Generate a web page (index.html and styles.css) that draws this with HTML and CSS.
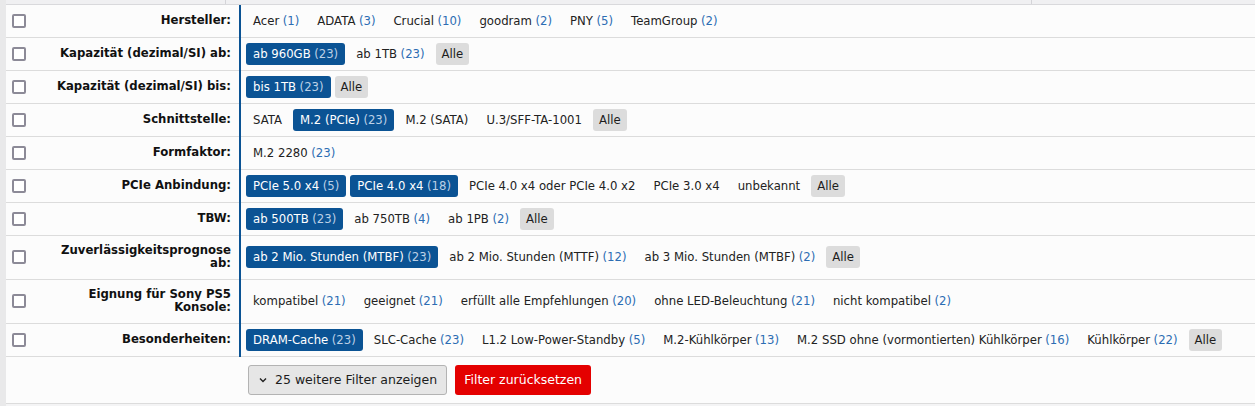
FILE: index.html
```html
<!DOCTYPE html>
<html lang="de">
<head>
<meta charset="utf-8">
<title>Filter</title>
<link rel="stylesheet" href="styles.css">
</head>
<body>
<div class="page">
  <div class="topstrip">
    <div class="ts-a"></div>
    <div class="ts-b"></div>
    <div class="ts-c"></div>
  </div>
  <div class="filters">
    <div class="row">
      <div class="lcell"><span class="check"></span><span class="label">Hersteller:</span></div>
      <div class="bar"></div>
      <div class="vcell">
        <span class="opt">Acer <span class="cnt">(1)</span></span>
        <span class="opt">ADATA <span class="cnt">(3)</span></span>
        <span class="opt">Crucial <span class="cnt">(10)</span></span>
        <span class="opt">goodram <span class="cnt">(2)</span></span>
        <span class="opt">PNY <span class="cnt">(5)</span></span>
        <span class="opt">TeamGroup <span class="cnt">(2)</span></span>
      </div>
    </div>
    <div class="row">
      <div class="lcell"><span class="check"></span><span class="label">Kapazität (dezimal/SI) ab:</span></div>
      <div class="bar"></div>
      <div class="vcell">
        <span class="opt sel">ab 960GB <span class="cnt">(23)</span></span>
        <span class="opt">ab 1TB <span class="cnt">(23)</span></span>
        <span class="opt all">Alle</span>
      </div>
    </div>
    <div class="row">
      <div class="lcell"><span class="check"></span><span class="label">Kapazität (dezimal/SI) bis:</span></div>
      <div class="bar"></div>
      <div class="vcell">
        <span class="opt sel">bis 1TB <span class="cnt">(23)</span></span>
        <span class="opt all">Alle</span>
      </div>
    </div>
    <div class="row">
      <div class="lcell"><span class="check"></span><span class="label">Schnittstelle:</span></div>
      <div class="bar"></div>
      <div class="vcell">
        <span class="opt">SATA</span>
        <span class="opt sel">M.2 (PCIe) <span class="cnt">(23)</span></span>
        <span class="opt">M.2 (SATA)</span>
        <span class="opt">U.3/SFF-TA-1001</span>
        <span class="opt all">Alle</span>
      </div>
    </div>
    <div class="row">
      <div class="lcell"><span class="check"></span><span class="label">Formfaktor:</span></div>
      <div class="bar"></div>
      <div class="vcell">
        <span class="opt">M.2 2280 <span class="cnt">(23)</span></span>
      </div>
    </div>
    <div class="row">
      <div class="lcell"><span class="check"></span><span class="label">PCIe Anbindung:</span></div>
      <div class="bar"></div>
      <div class="vcell">
        <span class="opt sel">PCIe 5.0 x4 <span class="cnt">(5)</span></span>
        <span class="opt sel">PCIe 4.0 x4 <span class="cnt">(18)</span></span>
        <span class="opt">PCIe 4.0 x4 oder PCIe 4.0 x2</span>
        <span class="opt">PCIe 3.0 x4</span>
        <span class="opt">unbekannt</span>
        <span class="opt all">Alle</span>
      </div>
    </div>
    <div class="row">
      <div class="lcell"><span class="check"></span><span class="label">TBW:</span></div>
      <div class="bar"></div>
      <div class="vcell">
        <span class="opt sel">ab 500TB <span class="cnt">(23)</span></span>
        <span class="opt">ab 750TB <span class="cnt">(4)</span></span>
        <span class="opt">ab 1PB <span class="cnt">(2)</span></span>
        <span class="opt all">Alle</span>
      </div>
    </div>
    <div class="row">
      <div class="lcell"><span class="check"></span><span class="label">Zuverlässigkeitsprognose ab:</span></div>
      <div class="bar"></div>
      <div class="vcell">
        <span class="opt sel">ab 2 Mio. Stunden (MTBF) <span class="cnt">(23)</span></span>
        <span class="opt">ab 2 Mio. Stunden (MTTF) <span class="cnt">(12)</span></span>
        <span class="opt">ab 3 Mio. Stunden (MTBF) <span class="cnt">(2)</span></span>
        <span class="opt all">Alle</span>
      </div>
    </div>
    <div class="row">
      <div class="lcell"><span class="check"></span><span class="label">Eignung für Sony PS5 Konsole:</span></div>
      <div class="bar"></div>
      <div class="vcell">
        <span class="opt">kompatibel <span class="cnt">(21)</span></span>
        <span class="opt">geeignet <span class="cnt">(21)</span></span>
        <span class="opt">erfüllt alle Empfehlungen <span class="cnt">(20)</span></span>
        <span class="opt">ohne LED-Beleuchtung <span class="cnt">(21)</span></span>
        <span class="opt">nicht kompatibel <span class="cnt">(2)</span></span>
      </div>
    </div>
    <div class="row">
      <div class="lcell"><span class="check"></span><span class="label">Besonderheiten:</span></div>
      <div class="bar"></div>
      <div class="vcell">
        <span class="opt sel">DRAM-Cache <span class="cnt">(23)</span></span>
        <span class="opt">SLC-Cache <span class="cnt">(23)</span></span>
        <span class="opt">L1.2 Low-Power-Standby <span class="cnt">(5)</span></span>
        <span class="opt">M.2-Kühlkörper <span class="cnt">(13)</span></span>
        <span class="opt">M.2 SSD ohne (vormontierten) Kühlkörper <span class="cnt">(16)</span></span>
        <span class="opt">Kühlkörper <span class="cnt">(22)</span></span>
        <span class="opt all">Alle</span>
      </div>
    </div>
    <div class="row actions">
      <div class="lcell"></div>
      <div class="acell">
        <button class="btn more" type="button"><svg class="chev" width="8" height="6" viewBox="0 0 8 6"><path d="M1 1.5 L4 4.5 L7 1.5" fill="none" stroke="#222" stroke-width="1.4"/></svg>25 weitere Filter anzeigen</button>
        <button class="btn reset" type="button">Filter zurücksetzen</button>
      </div>
    </div>
  </div>
</div>
</body>
</html>
```

FILE: styles.css
```css
html, body {
  margin: 0;
  padding: 0;
}
body {
  background: #e9e9ea;
  font-family: "DejaVu Sans", Verdana, sans-serif;
  font-size: 11.7px;
  color: #1d1d1d;
}
.page {
  margin-left: 6px;
  background: #f4f4f5;
  height: 406px;
}
.topstrip {
  display: flex;
  height: 4px;
  background: #f0f0f2;
  border-bottom: 1px solid #d9d9dc;
}
.ts-a {
  width: 219px;
  border-right: 1px solid #d4d4d8;
}
.ts-b {
  width: 805px;
  border-right: 1px solid #d4d4d8;
}
.ts-c {
  flex: 1;
}
.filters {
  background: #fcfcfc;
}
.row {
  display: grid;
  grid-template-columns: 233px 2px 1fr;
}
.lcell {
  display: flex;
  align-items: center;
  border-bottom: 1px solid #dcdcdc;
}
.check {
  flex: none;
  width: 10px;
  height: 10px;
  margin-left: 6px;
  border: 2px solid #8c8a97;
  border-radius: 2px;
  background: #fff;
}
.label {
  flex: 1;
  text-align: right;
  font-weight: bold;
  color: #111;
  line-height: 13.4px;
  padding: 8px 8px 8px 20px;
}
.bar {
  background: #0b5394;
}
.vcell {
  display: flex;
  flex-wrap: wrap;
  align-items: center;
  gap: 4px;
  padding: 5px 5px;
  border-bottom: 1px solid #dcdcdc;
}
.opt {
  display: inline-flex;
  align-items: center;
  height: 22px;
  padding: 0 7px;
  border-radius: 3px;
  white-space: nowrap;
  color: #222;
}
.cnt {
  color: #2c6db3;
  margin-left: 0.3em;
}
.opt.sel {
  background: #0b5394;
  color: #fff;
}
.opt.sel .cnt {
  color: #bcd0e6;
}
.opt.all {
  background: #dcdcdc;
  color: #1d1d1d;
  padding: 0 6px;
}
.actions .lcell {
  border-bottom: 1px solid #dcdcdc;
}
.acell {
  grid-column: 2 / 4;
  display: flex;
  align-items: center;
  gap: 8px;
  padding: 8px 9px;
  border-bottom: 1px solid #dcdcdc;
}
.btn {
  font-family: "DejaVu Sans", Verdana, sans-serif;
  font-size: 12.5px;
  height: 30px;
  border-radius: 3px;
  display: inline-flex;
  align-items: center;
  margin: 0;
}
.more {
  background: #e6e6e6;
  border: 1px solid #b3b3b3;
  color: #1d1d1d;
  padding: 0 9px 0 9px;
}
.chev {
  margin-right: 8px;
  margin-left: 1px;
}
.reset {
  background: #e40000;
  border: none;
  color: #fff;
  padding: 0 9px;
}
```
